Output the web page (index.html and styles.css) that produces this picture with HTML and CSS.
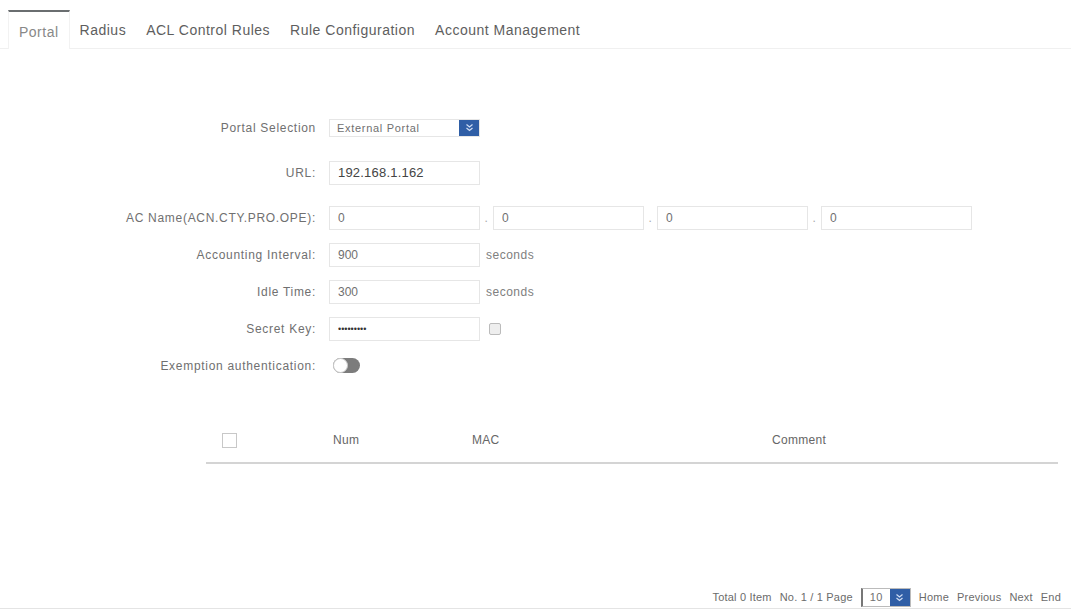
FILE: index.html
```html
<!DOCTYPE html>
<html lang="en">
<head>
    <meta charset="UTF-8">
    <title>Portal</title>
    <link rel="stylesheet" href="styles.css">
</head>
<body>
    <div class="tabs">
        <div class="tab active">Portal</div>
        <div class="tab">Radius</div>
        <div class="tab">ACL Control Rules</div>
        <div class="tab">Rule Configuration</div>
        <div class="tab">Account Management</div>
    </div>

    <form class="settings">
        <div class="row row-wide">
            <label>Portal Selection</label>
            <div class="select">
                <span class="select-text">External Portal</span>
                <span class="select-btn">
                    <svg width="9" height="9" viewBox="0 0 9 9"><path d="M1.5 1.5 L4.5 4 L7.5 1.5 M1.5 5 L4.5 7.5 L7.5 5" fill="none" stroke="#cfdcf2" stroke-width="1.2"/></svg>
                </span>
            </div>
        </div>
        <div class="row row-wide">
            <label>URL:</label>
            <input class="field url" type="text" value="192.168.1.162">
        </div>
        <div class="row">
            <label>AC Name(ACN.CTY.PRO.OPE):</label>
            <input class="field" type="text" value="0">
            <span class="dot">.</span>
            <input class="field" type="text" value="0">
            <span class="dot">.</span>
            <input class="field" type="text" value="0">
            <span class="dot">.</span>
            <input class="field" type="text" value="0">
        </div>
        <div class="row">
            <label>Accounting Interval:</label>
            <input class="field" type="text" value="900">
            <span class="unit">seconds</span>
        </div>
        <div class="row">
            <label>Idle Time:</label>
            <input class="field" type="text" value="300">
            <span class="unit">seconds</span>
        </div>
        <div class="row">
            <label>Secret Key:</label>
            <input class="field pass" type="password" value="123456789">
            <span class="check small"></span>
        </div>
        <div class="row">
            <label>Exemption authentication:</label>
            <span class="switch"><span class="knob"></span></span>
        </div>
    </form>

    <div class="table">
        <div class="thead">
            <span class="cell"><span class="check"></span></span>
            <span class="cell">Num</span>
            <span class="cell">MAC</span>
            <span class="cell center">Comment</span>
        </div>
    </div>

    <div class="pager">
        <span>Total 0 Item</span>
        <span>No. 1 / 1 Page</span>
        <div class="select size">
            <span class="select-text">10</span>
            <span class="select-btn">
                <svg width="9" height="9" viewBox="0 0 9 9"><path d="M1.5 1.5 L4.5 4 L7.5 1.5 M1.5 5 L4.5 7.5 L7.5 5" fill="none" stroke="#cfdcf2" stroke-width="1.2"/></svg>
            </span>
        </div>
        <span>Home</span>
        <span>Previous</span>
        <span>Next</span>
        <span>End</span>
    </div>
</body>
</html>
```

FILE: styles.css
```css
body {
    font-family: "Liberation Sans", Arial, sans-serif;
    color: #6b6b6b;
    background-color: #fff;
    margin: 0;
    padding: 0;
    width: 1071px;
    height: 612px;
    position: relative;
    overflow: hidden;
}

.tabs {
    display: flex;
    padding-left: 8px;
    height: 38px;
    margin-top: 10px;
    border-bottom: 1px solid #f0f0f0;
}

.tab {
    font-size: 14px;
    letter-spacing: 0.5px;
    padding: 10px 10px 0;
    color: #5e5e5e;
    border-top: 2px solid transparent;
}

.tab.active {
    color: #888;
    border-top: 2px solid #6a6e70;
    border-left: 1px solid #f2f2f2;
    border-right: 1px solid #f2f2f2;
    padding: 12px 10px 0;
    margin-bottom: -1px;
    background-color: #fff;
}

.settings {
    padding-top: 60px;
}

.row {
    display: flex;
    align-items: center;
    height: 37px;
    font-size: 12px;
    letter-spacing: 0.7px;
}

.row-wide {
    margin-bottom: 8px;
}

.row label {
    width: 316px;
    text-align: right;
    margin-right: 13px;
    color: #707070;
}

.select {
    display: flex;
    width: 151px;
    height: 18px;
    border: 1px solid #e6e6e6;
    box-sizing: border-box;
}

.select-text {
    flex: 1;
    font-size: 11px;
    padding-left: 7px;
    line-height: 16px;
    color: #707070;
}

.select-btn {
    width: 20px;
    background-color: #2f5ea6;
    display: flex;
    align-items: center;
    justify-content: center;
}

.field {
    width: 151px;
    height: 24px;
    box-sizing: border-box;
    border: 1px solid #e6e6e6;
    padding: 0 8px;
    font-family: inherit;
    font-size: 12px;
    color: #707070;
    outline: none;
}

.field.url {
    font-size: 13px;
    color: #444;
    letter-spacing: 0.2px;
}

.field.pass {
    font-size: 9px;
    color: #333;
    letter-spacing: 0;
}

.dot {
    width: 13px;
    text-align: center;
    color: #aaa;
}

.unit {
    margin-left: 6px;
    color: #808080;
    letter-spacing: 0.5px;
}

.check {
    display: inline-block;
    width: 15px;
    height: 15px;
    box-sizing: border-box;
    border: 1px solid #c8c8c8;
    background-color: #fff;
}

.check.small {
    width: 12px;
    height: 12px;
    margin-left: 9px;
    background-color: #eee;
    border-color: #bbb;
    border-radius: 2px;
}

.switch {
    display: inline-block;
    width: 27px;
    height: 15px;
    border-radius: 8px;
    background-color: #7c7c7c;
    margin-left: 4px;
    position: relative;
}

.knob {
    position: absolute;
    left: 0;
    top: 0;
    width: 15px;
    height: 15px;
    box-sizing: border-box;
    border-radius: 50%;
    background-color: #fff;
    border: 1px solid #ccc;
}

.table {
    margin: 41px 13px 0 206px;
}

.thead {
    display: grid;
    grid-template-columns: 127px 139px 68px 1fr;
    align-items: center;
    height: 30px;
    padding-bottom: 7px;
    border-bottom: 2px solid #d4d4d4;
    font-size: 12px;
    letter-spacing: 0.3px;
    color: #666;
}

.thead .cell:first-child {
    padding-left: 16px;
    display: flex;
}

.thead .center {
    text-align: center;
}

.pager {
    position: absolute;
    left: 0;
    right: 0;
    bottom: 3px;
    height: 22px;
    display: flex;
    justify-content: flex-end;
    align-items: center;
    gap: 8px;
    padding-right: 10px;
    font-size: 11px;
    letter-spacing: 0.2px;
    color: #6b6b6b;
    border-bottom: 1px solid #e4e4e4;
}

.select.size {
    width: 50px;
    height: 19px;
    border-color: #bbb;
    border-left: 2px solid #777;
}

.select.size .select-text {
    font-size: 11px;
    line-height: 17px;
}
```
